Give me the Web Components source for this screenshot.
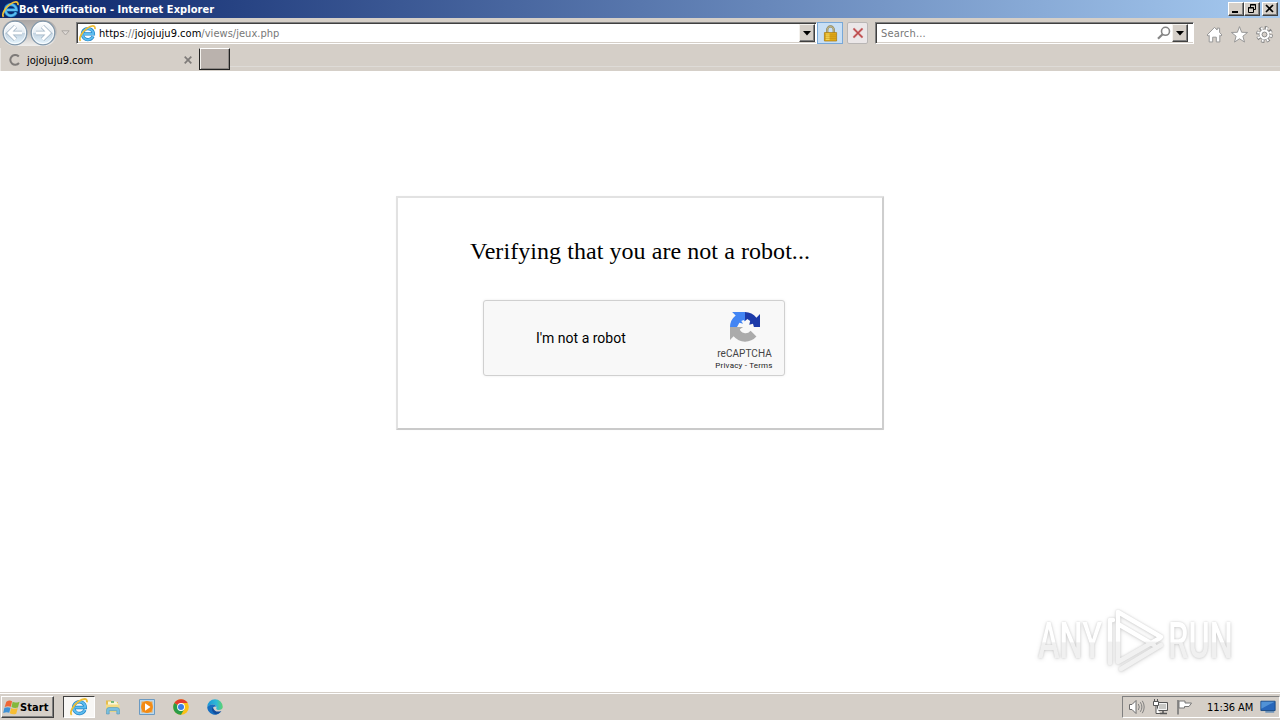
<!DOCTYPE html>
<html lang="en">
<head>
<meta charset="utf-8">
<title>Bot Verification</title>
<style>
    body {
        margin: 0;
        width: 1280px;
        height: 720px;
        overflow: hidden;
        background: #fff;
        --face: #d5cfc8;
    }
</style>
</head>
<body>
<desktop-screen></desktop-screen>

<script>
const icons = {
    ie: `<svg viewBox="0 0 16 16">
        <path d="M13.200 10.600A5.200 5.200 0 1 1 13.600 8.400H4.500" fill="none" stroke="#2184c6" stroke-width="3"/>
        <path d="M13.200 10.600A5.200 5.200 0 1 1 13.600 8.400H4.500" fill="none" stroke="#5dbdf0" stroke-width="1.800"/>
        <path d="M1.500 15C-.8 12.500 3 6.500 7.500 3.200C11.500 .3 15.700-.3 15 3.800" fill="none" stroke="#eebd35" stroke-width="1.600"/>
        </svg>`,
    back: `<svg viewBox="0 0 26 26">
        <defs><linearGradient id="g" x2="0" y2="1"><stop stop-color="#fff"/><stop offset=".48" stop-color="#e3ebf2"/><stop offset=".5" stop-color="#c3d3e1"/><stop offset="1" stop-color="#e8f7ff"/></linearGradient></defs>
        <circle cx="13" cy="13" r="11.800" fill="url(#g)" stroke="#8197aa" stroke-width="1.300"/>
        <circle cx="13" cy="13" r="10.600" fill="none" stroke="#fff" stroke-opacity=".8"/>
        <path d="M13.500 6.500L7 13l6.500 6.500M7.500 13H20" fill="none" stroke="#9fb2c2" stroke-width="4.400"/>
        <path d="M13.500 6.500L7 13l6.500 6.500M7.500 13H20" fill="none" stroke="#fff" stroke-width="3"/></svg>`,
    lock: `<svg viewBox="0 0 16 18">
        <path d="M4.500 9V5a3.500 3.500 0 0 1 7 0V9" fill="none" stroke="#8b8259" stroke-width="2.400"/>
        <path d="M4.500 9V5a3.500 3.500 0 0 1 7 0V9" fill="none" stroke="#d9cf9c" stroke-width=".8"/>
        <path d="M1.500 8h13v9h-13z" fill="#e3ab18" stroke="#a87b12" stroke-width=".8"/>
        <path d="M3 9h4v7H3z" fill="#f9dc5c"/><path d="M2 10.500h12M2 12.500h12M2 14.500h12" stroke="#b98610" stroke-width=".6"/></svg>`,
    stop: `<svg viewBox="0 0 12 12"><path d="M1.500 1.500l9 9M10.500 1.500l-9 9" stroke="#e3b9b9" stroke-width="2.800"/><path d="M1.500 1.500l9 9M10.500 1.500l-9 9" stroke="#bb484a" stroke-width="1.500"/></svg>`,
    search: `<svg viewBox="0 0 14 14"><circle cx="8.500" cy="5.300" r="4" fill="none" stroke="#858585" stroke-width="1.600"/><path d="M5.600 8.200L1 12.800" stroke="#858585" stroke-width="2.200"/></svg>`,
    arrow: `<svg viewBox="0 0 8 5"><path d="M0 0h8L4 4.500z" fill="#000"/></svg>`,
    home: `<svg viewBox="0 0 16 16"><path d="M1 8.500L8 1.300l2.500 2.500V2h2.300v4L15 8.500l-1 1-1-.8V15H9.700v-4.500H6.300V15H3V8.700l-1 .8z" fill="#fff" stroke="#949494" stroke-width=".9"/></svg>`,
    star: `<svg viewBox="0 0 16 16"><path d="M8 .6l2 5.300 5.600.2-4.400 3.500 1.500 5.500L8 12l-4.700 3.100 1.500-5.500L.4 6.100 6 5.900z" fill="#fff" stroke="#949494" stroke-width=".9"/></svg>`,
    gear: `<svg viewBox="0 0 16 16">
        <circle cx="8" cy="8" r="6.300" fill="none" stroke="#868686" stroke-width="3.200" stroke-dasharray="3 1.948"/>
        <circle cx="8" cy="8" r="5.400" fill="#868686"/>
        <circle cx="8" cy="8" r="6" fill="none" stroke="#fff" stroke-width="2.300" stroke-dasharray="1.600 3.112" stroke-dashoffset="-.65"/>
        <circle cx="8" cy="8" r="4.700" fill="#fff"/><circle cx="8" cy="8" r="2.300" fill="#d5cfc8" stroke="#868686" stroke-width=".9"/></svg>`,
    flag: `<svg viewBox="0 0 18 18">
        <path d="M3.500 3Q7 .5 9.600 2.500L8.300 8.300Q5 7 1.800 8.600z" fill="#ef6736"/>
        <path d="M10.200 3Q13 4.500 17.500 2.800L15.800 9Q12 10 9 8.500z" fill="#83b83c"/>
        <path d="M1.500 9.300Q5 8 8 9.200L6.600 14.600Q4 13.200.2 14.800z" fill="#3f91d5"/>
        <path d="M8.700 9.400Q11.500 11 15.600 9.800L14 15.600Q10.500 17 7.200 15z" fill="#f7bd32"/></svg>`,
    folder: `<svg viewBox="0 0 18 18">
        <path d="M2 2.500h5l1 1.500h6v10H2z" fill="#e5bd4d"/><path d="M4 3.500h8l2 2v6H4z" fill="#f9f5d7"/>
        <path d="M7 4h3" stroke="#4ba75c" stroke-width="1.500"/><path d="M2 6.500h13.500V14H2z" fill="#f5db82"/>
        <path d="M2.500 16V12Q2.500 9.500 5 9.500h8q2.500 0 2.500 2.500v4h-2.700v-3.300H5.200V16z" fill="#79bfe0" stroke="#5499bb" stroke-width=".6"/></svg>`,
    media: `<svg viewBox="0 0 18 18"><path d="M1.500 1.500h15v15h-15z" fill="#b9d8ee" stroke="#6b9ac2"/><path d="M3.500 3.500h11v11h-11z" fill="#f0a548"/>
        <circle cx="9" cy="9" r="5.900" fill="#f38b14"/><path d="M7 5.300l5.500 3.700L7 12.700z" fill="#fff"/></svg>`,
    chrome: `<svg viewBox="0 0 18 18"><circle cx="9" cy="9" r="7.800" fill="#fbc116"/>
        <path d="M9 9L2.250 5.100A7.800 7.800 0 0 1 15.750 5.100H9z" fill="#e33b2e"/>
        <path d="M9 9L2.250 5.100A7.800 7.800 0 0 0 9 16.800L12.400 11z" fill="#2a9c48"/>
        <circle cx="9" cy="9" r="3.900" fill="#fff"/><circle cx="9" cy="9" r="3" fill="#3b7de6"/></svg>`,
    edge: `<svg viewBox="0 0 18 18">
        <defs><linearGradient id="e" x2="1"><stop stop-color="#1b96d8"/><stop offset=".6" stop-color="#2fb9d6"/><stop offset="1" stop-color="#5fd46b"/></linearGradient></defs>
        <path d="M1.200 9A7.800 7.800 0 0 1 16.800 9Q16.500 12 12.500 12 9.500 11.800 10.500 9.500 10.500 6.500 6.500 6.500 3 6.500 1.200 9z" fill="url(#e)"/>
        <path d="M1.200 9Q3 6.300 6.800 6.500 9.500 6.700 10.400 8.500 6 8 7 12 8 15 15 13.800A7.800 7.800 0 0 1 1.200 9z" fill="#176ec0"/>
        <path d="M6 9.500Q5.300 14 10 16.600 13 16 15.500 13 9 15 7.500 10.500z" fill="#124d9c"/></svg>`,
    speaker: `<svg viewBox="0 0 18 18"><path d="M1.500 6.500H4L8 2.500v13L4 11.500H1.500z" fill="#fff" stroke="#6c6c6c"/>
        <path d="M10.300 6q2 3 0 6M12.300 4.200q3.200 4.800 0 9.600M14.300 2.800q3.800 6.200 0 12.400" fill="none" stroke="#777" stroke-width=".9"/></svg>`,
    network: `<svg viewBox="0 0 18 18"><path d="M5.500 4.500h10v8h-10z" fill="#c7c7c4" stroke="#555"/><path d="M6.500 5.500h8v6h-8z" fill="none" stroke="#fff" stroke-width=".8"/>
        <path d="M8 15.500h7M11 13v2" stroke="#555" stroke-width="1.500"/><path d="M2.500 1v3M5.500 1v3M1.500 3.500h5v4h-5zM4 8v7.500h4" fill="#fff" stroke="#555"/></svg>`,
    notice: `<svg viewBox="0 0 18 18"><path d="M2 2v14.500" stroke="#777" stroke-width="1.600"/><path d="M3 3h6v2h6.500l-2.500 3.500H8.500V10H3z" fill="#fff" stroke="#777"/></svg>`,
    desktop: `<svg viewBox="0 0 18 18"><path d="M1 2.500h16v10.500H1z" fill="#2867bb" stroke="#17477f"/><path d="M1.500 3h15L1.500 11z" fill="#5192d6"/><path d="M6 14.500h10" stroke="#4d80b5" stroke-width="1.500"/></svg>`,
    captcha: `<svg viewBox="0 0 64 64">
        <path d="M64 32V4.500L56.400 12.100A32 32 0 0 0 32 0V19L37 15 43 19 41 27 49 25 51 32z" fill="#1c3aa9"/>
        <path d="M32 0H4.500L12.100 7.600A32 32 0 0 0 0 32H15L20 23 28 25 24 19 29 17 32 20z" fill="#4285f4"/>
        <path d="M0 32V59.500L7.600 51.900A32 32 0 0 0 56.400 52L44 40Q38 47 30 45 22 43 21 37L28 32z" fill="#ababab"/></svg>`,
};

class UiIcon extends HTMLElement {
    constructor() {
        super();
        this.attachShadow({ mode: 'open' });
    }

    connectedCallback() {
        this.shadowRoot.innerHTML = `
        <style>
            :host { display: block; flex: none; width: 16px; height: 16px; }
            svg { display: block; width: 100%; height: 100%; }
        </style>${icons[this.getAttribute('name')]}`;
    }
}
customElements.define('ui-icon', UiIcon);

// Builds a simple element class around a fixed shadow markup
function define(name, html) {
    const template = document.createElement('template');
    template.innerHTML = html;
    customElements.define(name, class extends HTMLElement {
        constructor() {
            super();
            this.attachShadow({ mode: 'open' }).appendChild(template.content.cloneNode(true));
        }
    });
}

define('window-button', `
<style>
    :host {
        display: block;
        box-sizing: border-box;
        width: 16px;
        height: 14px;
        background: var(--face);
        border: 1px solid;
        border-color: #fff #404040 #404040 #fff;
        box-shadow: inset -1px -1px #808080;
    }
    ::slotted(svg) { display: block; width: 14px; height: 12px; }
</style>
<slot></slot>`);

define('title-bar', `
<style>
    :host {
        display: flex;
        align-items: center;
        box-sizing: border-box;
        height: 18px;
        padding: 0 2px 0 2px;
        background: linear-gradient(90deg, #0a246a, #a6caf0);
        color: #fff;
        font: bold 11px/18px "DejaVu Sans Condensed", "DejaVu Sans", sans-serif;
    }
    ui-icon { width: 17px; height: 17px; }
    span { flex: 1; padding-top: 1px; letter-spacing: .04px; white-space: nowrap; }
    window-button:last-child { margin-left: 2px; }
</style>
<ui-icon name="ie"></ui-icon>
<span><slot></slot></span>
<window-button><svg><path d="M3 8h6v2H3z"/></svg></window-button>
<window-button><svg fill="none" stroke="#000"><path d="M5.500 4V1.500h5v5H9M5 2h6M3.500 4.500h5v5h-5zM3 5h6"/></svg></window-button>
<window-button><svg><path d="M3 2l7 7M10 2l-7 7" stroke="#000" stroke-width="1.700"/></svg></window-button>`);

define('drop-button', `
<style>
    :host {
        display: flex;
        align-items: center;
        justify-content: center;
        box-sizing: border-box;
        width: 16px;
        height: 18px;
        background: var(--face);
        border: 1px solid;
        border-color: #f4f2ee #404040 #404040 #f4f2ee;
        box-shadow: inset -1px -1px #808080;
    }
    ui-icon { width: 8px; height: 5px; }
</style>
<ui-icon name="arrow"></ui-icon>`);

define('text-field', `
<style>
    :host {
        display: flex;
        align-items: center;
        box-sizing: border-box;
        height: 22px;
        background: #fff;
        border: 1px solid;
        border-color: #808080 #fff #fff #808080;
        box-shadow: inset 1px 1px #404040, inset 0 -1px var(--face);
        font: 11px/18px "DejaVu Sans Condensed", "DejaVu Sans", sans-serif;
        color: #777;
    }
</style>
<slot></slot>`);

define('browser-toolbar', `
<style>
    :host {
        display: flex;
        align-items: center;
        box-sizing: border-box;
        height: 30px;
        padding: 0 7px 0 2px;
        background: var(--face);
    }
    .nav { display: flex; gap: 2px; padding-right: 1px; border-radius: 13px; background: linear-gradient(#aaa6a5, #c3bfbc 45%, #f0efed); }
    .nav ui-icon { width: 26px; height: 26px; }
    .forward { transform: scaleX(-1); }
    .recent { width: 9px; height: 6px; margin: 0 6px 0 4px; }
    .address { width: 741px; }
    .address ui-icon { width: 17px; height: 17px; margin: 0 3px 0 2px; }
    .address drop-button { margin-right: 1px; }
    .url { flex: 1; padding-top: 2px; letter-spacing: .03px; white-space: nowrap; }
    b { font-weight: normal; color: #000; }
    .lock, .stop { display: flex; align-items: center; justify-content: center; box-sizing: border-box; height: 22px; }
    .lock { width: 26px; background: #c8dff5; border: 1px solid #78a8d8; }
    .lock ui-icon { width: 15px; height: 17px; }
    .stop { width: 21px; margin: 0 7px 0 4px; background: #ebe7e8; border: 1px solid #b9b6b5; border-radius: 2px; }
    .stop ui-icon { width: 12px; height: 12px; }
    .search { width: 319px; margin-right: 12px; }
    .search span { flex: 1; margin-left: 5px; padding-top: 2px; letter-spacing: .15px; }
    .search ui-icon { width: 14px; height: 14px; margin-right: 1px; }
    .search drop-button { margin-right: 5px; }
    .tools { display: flex; gap: 8px; margin-top: 3px; }
    .tools ui-icon { width: 17px; height: 17px; }
</style>
<div class="nav"><ui-icon name="back"></ui-icon><ui-icon class="forward" name="back"></ui-icon></div>
<svg class="recent" viewBox="0 0 9 6"><path d="M.8.8h7.400L4.500 5z" fill="#ddd9d5" stroke="#aaa6a2"/></svg>
<text-field class="address"><ui-icon name="ie"></ui-icon><span class="url"><b>https</b>://<b>jojojuju9.com</b>/views/jeux.php</span><drop-button></drop-button></text-field>
<div class="lock"><ui-icon name="lock"></ui-icon></div>
<div class="stop"><ui-icon name="stop"></ui-icon></div>
<text-field class="search"><span>Search...</span><ui-icon name="search"></ui-icon><drop-button></drop-button></text-field>
<div class="tools"><ui-icon name="home"></ui-icon><ui-icon name="star"></ui-icon><ui-icon name="gear"></ui-icon></div>`);

define('browser-tabs', `
<style>
    :host {
        display: flex;
        box-sizing: border-box;
        height: 23px;
        background: var(--face);
        font: 11px/23px "DejaVu Sans Condensed", "DejaVu Sans", sans-serif;
        color: #000;
    }
    .tab { display: flex; align-items: center; box-sizing: border-box; width: 199px; padding: 0 7px 0 8px; border-left: 1px solid #e8e5e1; }
    .tab span { flex: 1; margin-left: 6px; padding-top: 2px; line-height: 21px; }
    .tab svg { display: block; fill: none; stroke: #7e7b79; }
    .new { box-sizing: border-box; width: 31px; height: 22px; background: #bab2ad; border: 1px solid; border-color: #fff #222 #222 #222; box-shadow: inset 1px 0 #f4f2ee, inset -1px -1px #8c8784; }
    .rest { flex: 1; border-top: 1px solid #dedbd7; margin-top: 18px; }
</style>
<div class="tab">
    <svg width="12" height="12"><path d="M9.800 2.500A4.900 4.900 0 1 0 10 9" stroke-width="2"/></svg>
    <span><slot></slot></span>
    <svg width="8" height="8"><path d="M.7.700l6.600 6.600M7.300.700L.7 7.300" stroke-width="1.700"/></svg>
</div>
<div class="new"></div>
<div class="rest"></div>`);

define('captcha-box', `
<style>
    :host {
        display: flex;
        align-items: center;
        box-sizing: border-box;
        width: 302px;
        height: 76px;
        padding: 0 10px 0 52px;
        background: #f8f8f8;
        border: 1px solid #d0d0d0;
        border-radius: 3px;
        box-shadow: 0 0 3px rgba(0, 0, 0, .08);
        font-family: Roboto, sans-serif;
        color: #000;
    }
    .label { flex: 1; font-size: 14px; line-height: 17px; }
    .brand { display: flex; flex-direction: column; align-items: center; width: 60px; padding-top: 8px; color: #444; }
    .brand ui-icon { width: 30px; height: 30px; margin-left: 1px; }
    .name { margin: 6px 0 0 1px; font-size: 10px; line-height: 12px; letter-spacing: .05px; }
    .links { font-size: 8px; line-height: 12px; letter-spacing: .2px; color: #222; white-space: pre; }
</style>
<span class="label"><slot></slot></span>
<div class="brand">
    <ui-icon name="captcha"></ui-icon>
    <span class="name">reCAPTCHA</span>
    <span class="links">Privacy - Terms</span>
</div>`);

define('verify-card', `
<style>
    :host {
        display: flex;
        flex-direction: column;
        align-items: center;
        box-sizing: border-box;
        width: 488px;
        height: 234px;
        padding-top: 39px;
        background: #fff;
        border: 2px solid;
        border-color: #e2e2e2 #cecece #cacaca #e2e2e2;
        border-radius: 1px;
        box-shadow: 0 0 1px rgba(0, 0, 0, .08);
    }
    h1 { margin: 0 0 35px; font: 24px/28px "Liberation Serif", serif; letter-spacing: .06px; color: #000; }
    captcha-box { margin-right: 12px; }
</style>
<h1><slot></slot></h1>
<captcha-box>I'm not a robot</captcha-box>`);

define('run-watermark', `
<style>
    :host {
        display: flex;
        align-items: center;
        width: 196px;
        height: 64px;
        filter: drop-shadow(0 0 1px rgba(0, 0, 0, .15)) drop-shadow(0 1px 2px rgba(0, 0, 0, .13));
        font: 500 50px/56px Roboto, sans-serif;
    }
    .word { width: 66px; height: 56px; }
    .word span { display: inline-block; transform-origin: 0 50%; transform: scaleX(.65); background: linear-gradient(#fff 52%, #f0f0f0 53%); background-clip: text; color: transparent; }
    .word:last-child { width: 64px; }
    svg { display: block; width: 64px; height: 64px; fill: none; stroke: url(#fade); stroke-width: 4.400; stroke-linejoin: round; }
</style>
<div class="word"><span>ANY</span></div>
<svg viewBox="0 0 64 64">
    <defs><linearGradient id="fade" gradientUnits="userSpaceOnUse" x1="0" y1="0" x2="0" y2="64"><stop offset=".5" stop-color="#fff"/><stop offset=".52" stop-color="#f1f1f1"/></linearGradient></defs>
    <path d="M14 53V3L57 28M14 15L50 36M9 11H6V54M14 53L56 29M17 60L57 36" stroke-linecap="round"/>
</svg>
<div class="word"><span>RUN</span></div>`);

define('task-bar', `
<style>
    :host {
        display: flex;
        align-items: center;
        box-sizing: border-box;
        height: 28px;
        padding: 1px 0 0 1px;
        background: var(--face);
        border-top: 1px solid var(--face);
        box-shadow: inset 0 1px #fff;
        font: 11px/20px "DejaVu Sans Condensed", "DejaVu Sans", sans-serif;
        color: #000;
    }
    ui-icon { width: 18px; height: 18px; }
    .start { display: flex; align-items: center; box-sizing: border-box; width: 53px; height: 22px; margin-right: 9px; padding-left: 1px; border: 1px solid; border-color: #fff #404040 #404040 #fff; box-shadow: inset -1px -1px #808080; font-weight: bold; letter-spacing: .1px; }
    .start ui-icon { width: 17px; height: 17px; }
    .start span { padding-top: 2px; line-height: 18px; }
    .apps { display: flex; align-items: center; gap: 16px; flex: 1; }
    .active { display: flex; align-items: center; justify-content: center; box-sizing: border-box; width: 32px; height: 22px; margin-right: -7px; background: #f8f7f5; border: 1px solid; border-color: #404040 #fff #fff #404040; }
    .tray { display: flex; align-items: center; box-sizing: border-box; width: 158px; height: 22px; padding: 0 2px 0 5px; border: 1px solid; border-color: #808080 #fff #fff #808080; }
    .tray ui-icon { margin-right: 6px; }
    .tray .clock { flex: 1; margin-left: 7px; padding-top: 2px; line-height: 18px; white-space: nowrap; letter-spacing: -.1px; }
    .tray .show { width: 16px; height: 16px; margin: 0 1px 0 0; }
</style>
<div class="start"><ui-icon name="flag"></ui-icon><span>Start</span></div>
<div class="apps">
    <div class="active"><ui-icon name="ie"></ui-icon></div>
    <ui-icon name="folder"></ui-icon>
    <ui-icon name="media"></ui-icon>
    <ui-icon name="chrome"></ui-icon>
    <ui-icon name="edge"></ui-icon>
</div>
<div class="tray">
    <ui-icon name="speaker"></ui-icon>
    <ui-icon name="network"></ui-icon>
    <ui-icon name="notice"></ui-icon>
    <span class="clock">11:36 AM</span>
    <ui-icon class="show" name="desktop"></ui-icon>
</div>`);

define('desktop-screen', `
<style>
    :host { display: flex; flex-direction: column; width: 1280px; height: 720px; }
    main { position: relative; display: flex; justify-content: center; align-items: flex-start; box-sizing: border-box; flex: 1; padding-top: 125px; background: #fff; }
    run-watermark { position: absolute; right: 46px; bottom: 19px; }
</style>
<title-bar>Bot Verification - Internet Explorer</title-bar>
<browser-toolbar></browser-toolbar>
<browser-tabs>jojojuju9.com</browser-tabs>
<main>
    <verify-card>Verifying that you are not a robot...</verify-card>
    <run-watermark></run-watermark>
</main>
<task-bar></task-bar>`);
</script>
</body>
</html>
